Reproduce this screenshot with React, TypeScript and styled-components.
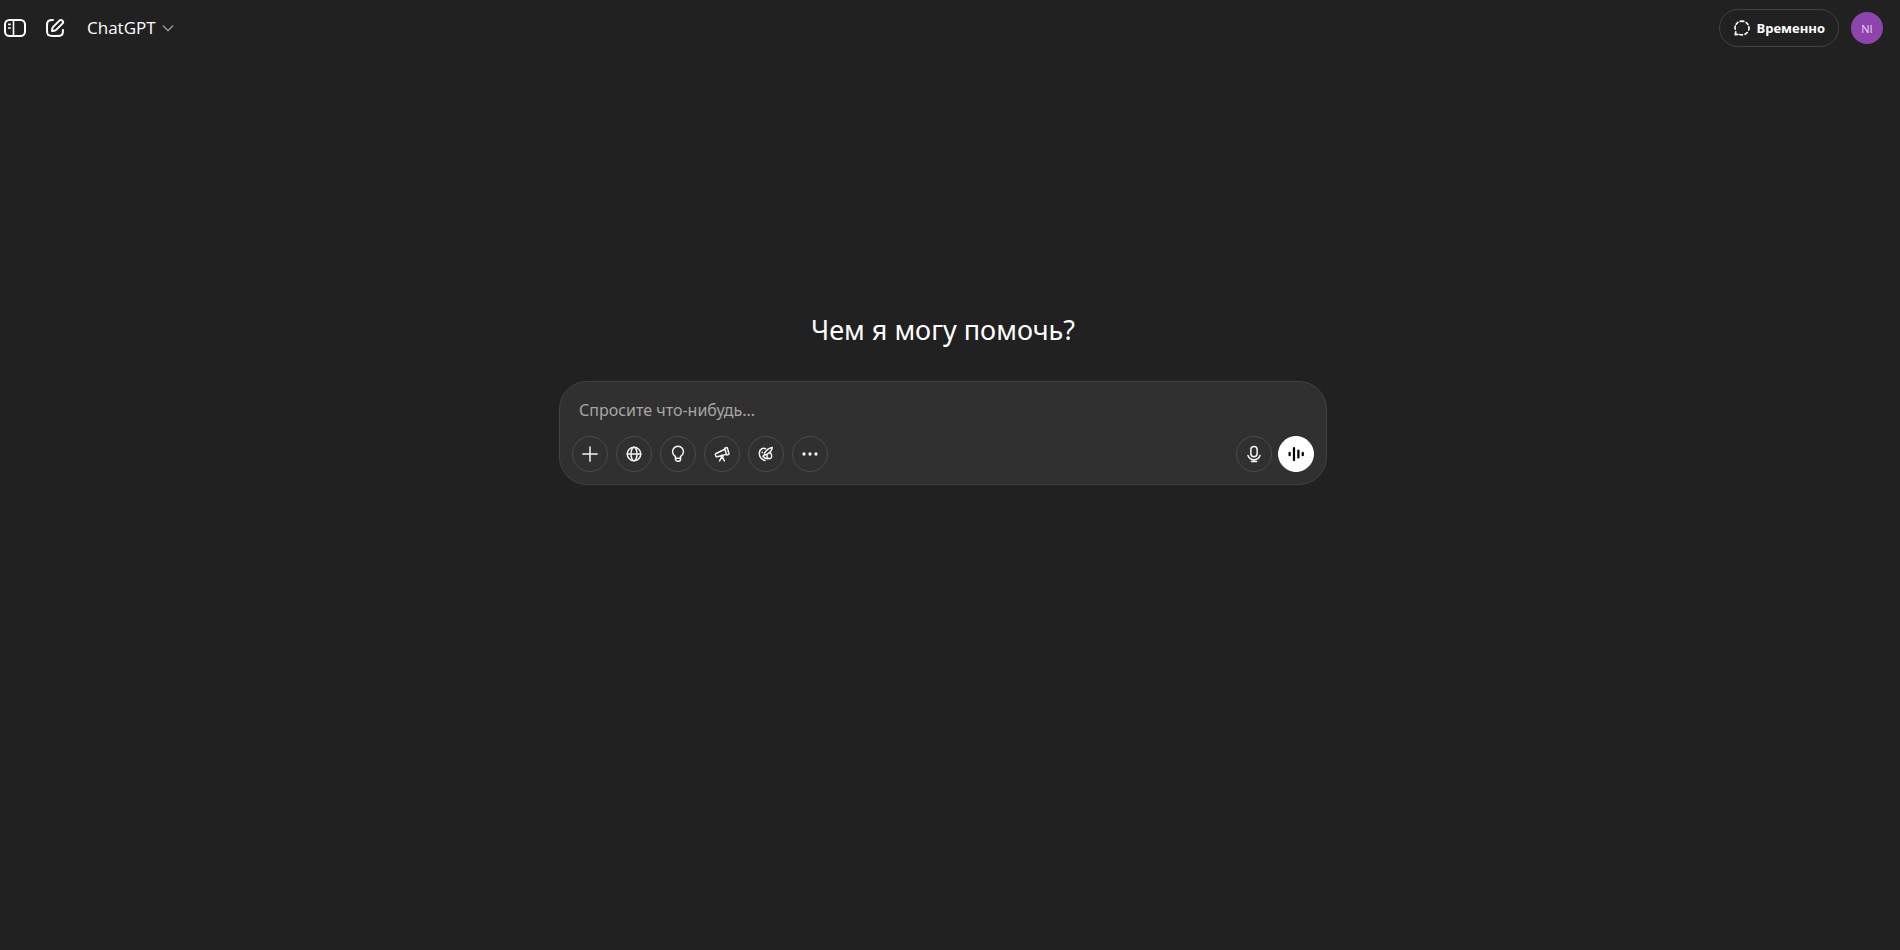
import React from "react";
import styled, { createGlobalStyle } from "styled-components";

const GlobalStyle = createGlobalStyle`
  *, *::before, *::after { box-sizing: border-box; }
  body {
    margin: 0;
    background: #212121;
    color: #fff;
    font-family: "Noto Sans", "Open Sans", sans-serif;
  }
  button, textarea { font: inherit; color: inherit; }
`;

const Page = styled.div`
  min-height: 100vh;
  padding-right: 14px;
  display: flex;
  flex-direction: column;
`;

const Header = styled.header`
  display: flex;
  align-items: center;
  justify-content: space-between;
  height: 56px;
  padding-right: 3px;
`;

const HeaderGroup = styled.div<{ $gap: number }>`
  display: flex;
  align-items: center;
  gap: ${(p) => p.$gap}px;
`;

const NavButtons = styled.nav`
  display: flex;
  gap: 8px;
  padding-left: 3px;
`;

const PlainButton = styled.button`
  display: flex;
  align-items: center;
  justify-content: center;
  width: 32px;
  height: 40px;
  padding: 0 8px 0 0;
  border: 0;
  background: none;
  cursor: pointer;
`;

const ModelButton = styled.button`
  display: flex;
  align-items: center;
  gap: 4px;
  height: 36px;
  margin-left: 2px;
  padding: 0 10px;
  border: 0;
  background: none;
  font-family: "Open Sans", sans-serif;
  font-size: 17px;
  line-height: 28px;
  cursor: pointer;

  svg { color: #9b9b9b; }
`;

const TemporaryButton = styled.button`
  display: flex;
  align-items: center;
  gap: 5px;
  height: 38px;
  padding: 0 13px;
  border: 1px solid #424242;
  border-radius: 19px;
  background: none;
  font-family: "Open Sans", sans-serif;
  font-size: 13px;
  font-weight: 700;
  cursor: pointer;
`;

const Avatar = styled.button`
  width: 32px;
  height: 32px;
  padding: 0;
  border: 0;
  border-radius: 50%;
  background: #8e44ad;
  color: #e9dcef;
  font-family: "Open Sans", sans-serif;
  font-size: 11px;
  cursor: pointer;
`;

const Main = styled.main`
  flex: 1;
  display: flex;
  flex-direction: column;
  align-items: center;
  gap: 34px;
  padding: 256px 16px 32px;
`;

const Title = styled.h1`
  margin: 0;
  font-size: 27px;
  font-weight: 400;
  line-height: 35px;
`;

const Composer = styled.form`
  width: 100%;
  max-width: 768px;
  padding: 16px 12px 12px;
  border: 1px solid #424242;
  border-radius: 28px;
  background: #303030;
`;

const Prompt = styled.textarea`
  display: block;
  width: 100%;
  height: 38px;
  padding: 0 7px;
  border: 0;
  outline: 0;
  resize: none;
  background: transparent;
  font-size: 16px;
  line-height: 24px;

  &::placeholder { color: #a6a6a6; opacity: 1; }
`;

const Toolbar = styled.div`
  display: flex;
  justify-content: space-between;
`;

const Tools = styled.div<{ $gap: number }>`
  display: flex;
  gap: ${(p) => p.$gap}px;
`;

const RoundButton = styled.button<{ $filled?: boolean }>`
  display: flex;
  align-items: center;
  justify-content: center;
  width: 36px;
  height: 36px;
  padding: 0;
  border: 1px solid ${(p) => (p.$filled ? "#fff" : "#4a4a4a")};
  border-radius: 50%;
  background: ${(p) => (p.$filled ? "#fff" : "transparent")};
  color: ${(p) => (p.$filled ? "#000" : "#f3f3f3")};
  cursor: pointer;
`;

type IconProps = { size?: number; weight?: number; children: React.ReactNode };

const Icon = ({ size = 18, weight = 2, children }: IconProps) => (
  <svg
    width={size}
    height={size}
    viewBox="0 0 24 24"
    fill="none"
    stroke="currentColor"
    strokeWidth={weight}
    strokeLinecap="round"
    strokeLinejoin="round"
    aria-hidden="true"
  >
    {children}
  </svg>
);

const SidebarIcon = () => (
  <Icon size={24}>
    <rect x="2" y="4" width="20" height="16" rx="4.5" />
    <path d="M10.5 4v16" strokeWidth="1.6" />
    <path d="M5.7 8.3h1.4M5.7 12h1.4" strokeWidth="1.7" />
  </Icon>
);

const NewChatIcon = () => (
  <Icon size={24}>
    <path d="M10 4c-3 0-4 .2-5 1.2S4 7.500 4 10v4c0 2.500 0 3.800 1 4.800S7.500 20 10 20h4c2.500 0 3.800 0 4.800-1s1.200-2 1.200-5" />
    <path d="m16.400 4.600-6 6c-.6.600-1 1.400-1.100 2.200L9 15l2.200-.3c.8-.1 1.600-.5 2.200-1.100l6-6a2.120 2.120 0 0 0-3-3Z" />
  </Icon>
);

const ChevronIcon = () => (
  <Icon size={16}>
    <path d="m5 9 7 7 7-7" />
  </Icon>
);

const TemporaryIcon = () => (
  <Icon weight={2.2}>
    <path d="M9.600 3.200a9.200 9.200 0 0 1 4.800 0M17.600 4.700a9.200 9.200 0 0 1 2.300 2.700M21.200 10.500a9.200 9.200 0 0 1-.2 4M19 18a9.200 9.200 0 0 1-3 2.300M12.600 21.200a9.200 9.200 0 0 1-3.600-.5M2.900 13.500a9.200 9.200 0 0 1 .1-4M4.300 6.900a9.200 9.200 0 0 1 2.300-2.400M3.700 17l-.7 4 3.400-.5" />
  </Icon>
);

const PlusIcon = () => (
  <Icon>
    <path d="M12 2.500v19M2.500 12h19" />
  </Icon>
);

const GlobeIcon = () => (
  <Icon>
    <circle cx="12" cy="12" r="9" />
    <ellipse cx="12" cy="12" rx="4" ry="9" />
    <path d="M3 12h18" />
  </Icon>
);

const BulbIcon = () => (
  <Icon>
    <path d="M8.600 17v-1.700a7.300 7.300 0 1 1 6.800 0V17M8.600 17.500h6.800M8.600 17v2a2.500 2.500 0 0 0 2.500 2.500h1.800a2.500 2.500 0 0 0 2.500-2.500v-2" />
  </Icon>
);

const TelescopeIcon = () => (
  <Icon>
    <path d="m15.600 4.300 2.400-.8a1 1 0 0 1 1.200.7l2 7.200a1 1 0 0 1-.7 1.200l-2.400.6ZM15.900 5.700 4 11.300a1.500 1.500 0 0 0-.8 1.800l.5 1.500a1.500 1.500 0 0 0 1.700 1l12.400-3.100" />
    <circle cx="12" cy="15" r="1.400" />
    <path d="m11.400 16.500-2.600 4.700M12.600 16.500l2.600 4.700" />
  </Icon>
);

const PaletteIcon = () => (
  <Icon>
    <path d="M11.500 5C8 3.500 3.300 5.500 3.100 10.500c-.2 5 3 8.800 7.600 10.300" />
    <path d="M20.400 3.200c-4.300.7-8.200 3.600-10.200 7.300a1.800 1.800 0 0 0 2.700 2.200c3.700-2 6.800-5.200 7.500-9.500Z" />
    <path d="M10.300 13c-1 .3-1.300 1.400-2.300 2 1.500 2.200 3.600 3.500 6 3.300M17.800 10.500c1.900 2 2.300 5.300.6 7a3.200 3.200 0 0 1-4.900-3.700" />
    <path d="M7 9.700v.1" strokeWidth="2.400" />
  </Icon>
);

const MoreIcon = () => (
  <Icon>
    <g fill="currentColor" stroke="none">
      <circle cx="4" cy="12" r="2.200" />
      <circle cx="12" cy="12" r="2.200" />
      <circle cx="20" cy="12" r="2.200" />
    </g>
  </Icon>
);

const MicIcon = () => (
  <Icon>
    <rect x="7.800" y="2" width="8.400" height="13.500" rx="4.200" />
    <path d="M4 14a8.500 8.500 0 0 0 16 0M12 19.500V22M8.500 22h7" />
  </Icon>
);

const VoiceIcon = () => (
  <Icon weight={3}>
    <path d="M3.500 10.500v3M9.300 4v16M15.200 7.500v9M21 10.500v3" />
  </Icon>
);

const tools = [
  { label: "Добавить", icon: <PlusIcon /> },
  { label: "Поиск", icon: <GlobeIcon /> },
  { label: "Размышление", icon: <BulbIcon /> },
  { label: "Исследование", icon: <TelescopeIcon /> },
  { label: "Создать изображение", icon: <PaletteIcon /> },
  { label: "Ещё", icon: <MoreIcon /> },
];

export default function App() {
  return (
    <>
      <GlobalStyle />
      <Page>
        <Header>
          <HeaderGroup $gap={0}>
            <NavButtons>
              <PlainButton aria-label="Боковая панель"><SidebarIcon /></PlainButton>
              <PlainButton aria-label="Новый чат"><NewChatIcon /></PlainButton>
            </NavButtons>
            <ModelButton>
              ChatGPT
              <ChevronIcon />
            </ModelButton>
          </HeaderGroup>
          <HeaderGroup $gap={12}>
            <TemporaryButton>
              <TemporaryIcon />
              Временно
            </TemporaryButton>
            <Avatar aria-label="Профиль">NI</Avatar>
          </HeaderGroup>
        </Header>
        <Main>
          <Title>Чем я могу помочь?</Title>
          <Composer onSubmit={(e) => e.preventDefault()}>
            <Prompt aria-label="Сообщение" placeholder="Спросите что-нибудь..." />
            <Toolbar>
              <Tools $gap={8}>
                {tools.map((tool) => (
                  <RoundButton key={tool.label} type="button" aria-label={tool.label}>
                    {tool.icon}
                  </RoundButton>
                ))}
              </Tools>
              <Tools $gap={6}>
                <RoundButton type="button" aria-label="Диктовка"><MicIcon /></RoundButton>
                <RoundButton type="button" aria-label="Голосовой режим" $filled><VoiceIcon /></RoundButton>
              </Tools>
            </Toolbar>
          </Composer>
        </Main>
      </Page>
    </>
  );
}
